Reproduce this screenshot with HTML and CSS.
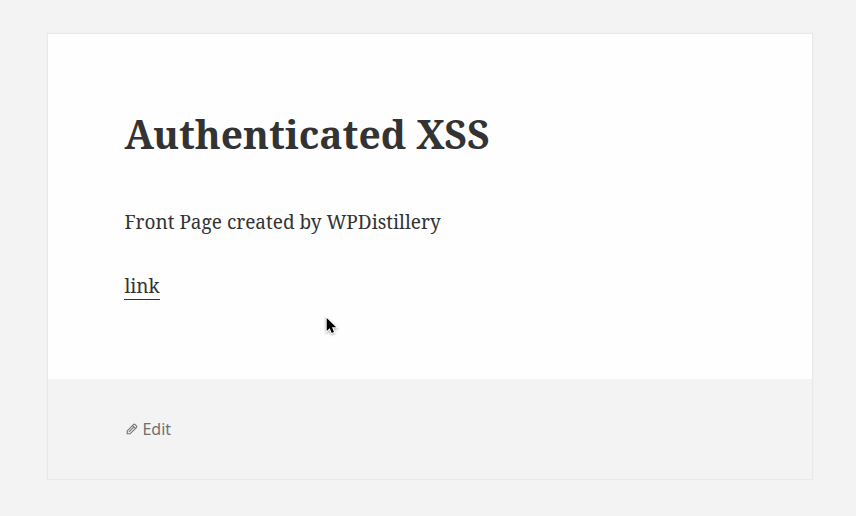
FILE: index.html
```
<!DOCTYPE html>
<html lang="en">
<head>
<meta charset="utf-8">
<title>Authenticated XSS</title>
<link rel="stylesheet" href="styles.css">
</head>
<body>
<article class="entry">
  <div class="entry-body">
    <h1 class="entry-title">Authenticated XSS</h1>
    <p class="entry-text">Front Page created by WPDistillery</p>
    <p class="entry-text"><a class="entry-link" href="#">link</a></p>
  </div>
  <footer class="entry-footer">
    <svg class="pencil" viewBox="0 0 12 12" width="12" height="12"><path d="M1.2 10.8V7.9L7.7 1.4q.6-.5 1.2 0l1.7 1.7q.5.6 0 1.2L4.1 10.8zM6.6 2.6l2.8 2.8M3 8.9l4.5-4.5"/></svg>
    <a class="edit-link" href="#">Edit</a>
  </footer>
</article>
<svg class="pointer" viewBox="0 0 14 20" width="14" height="20"><path class="pointer-edge" d="M1.7 2v13l3-2.8 2 4.7 2.3-1-2-4.6h4.2z"/><path d="M1.7 2v13l3-2.8 2 4.7 2.3-1-2-4.6h4.2z"/></svg>
</body>
</html>
```
FILE: styles.css
```
body {
  margin: 0;
  padding: 33px 43px 0 47px;
  background: #f3f3f3;
  color: #333;
  font-family: "Noto Serif", "Droid Serif", "DejaVu Serif", serif;
}
.entry {
  box-sizing: border-box;
  height: 447px;
  border: 1px solid #e9e9e9;
  background: #fefefe;
  box-shadow: 0 0 0 1px #f0f0f0;
}
.entry-body {
  box-sizing: border-box;
  height: 345px;
  padding: 76px 76.4px 0;
}
.entry-title {
  margin: 0 0 48px;
  font-size: 39px;
  line-height: 48px;
}
.entry-text {
  margin: 0 0 32px;
  font-size: 19px;
  line-height: 32px;
}
.entry-link {
  color: #333;
  text-decoration: none;
  border-bottom: 1px solid #333;
}
.entry-footer {
  display: flex;
  align-items: center;
  gap: 4.4px;
  height: 100px;
  padding-left: 78px;
  background: #f3f3f3;
}
.pencil {
  fill: none;
  stroke: #707070;
  stroke-width: 1.1;
}
.edit-link {
  color: #707070;
  font: 16px/24px "Noto Sans", sans-serif;
  text-decoration: none;
}
.pointer {
  position: absolute;
  left: 325px;
  top: 316px;
  overflow: visible;
  fill: #000;
  filter: drop-shadow(0 1px 1px rgba(0, 0, 0, .35));
}
.pointer-edge {
  stroke: #fff;
  stroke-width: 2;
}
```
